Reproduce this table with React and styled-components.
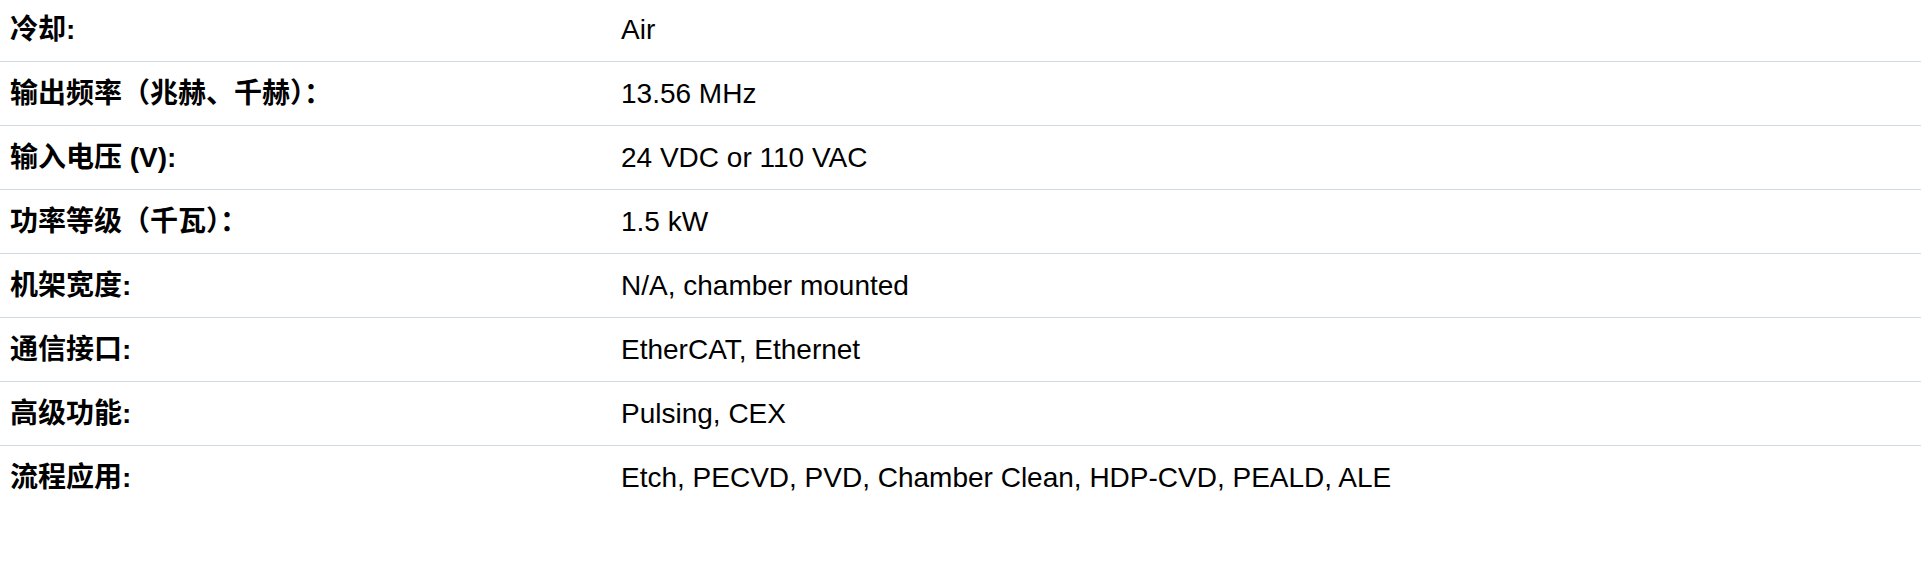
import React from 'react';
import styled, { createGlobalStyle } from 'styled-components';

const GlobalStyle = createGlobalStyle`
  html, body {
    margin: 0;
    padding: 0;
    background: #fff;
  }
  body {
    font-family: 'Liberation Sans', Arial, 'Noto Sans CJK SC', sans-serif;
    color: #000;
  }
`;

const SpecTable = styled.div`
  display: flex;
  flex-direction: column;
  width: 100%;
  margin-top: -2px;
`;

const SpecRow = styled.div`
  display: grid;
  grid-template-columns: 611px 1fr;
  border-bottom: 1px solid ${({ $last }) => ($last ? 'transparent' : '#d2dae1')};
`;

const SpecLabel = styled.div`
  padding: 10px 10px;
  font-size: 28px;
  line-height: 43px;
  font-weight: 700;
  font-family: 'Liberation Sans', Arial, 'Noto Sans CJK SC', sans-serif;
`;

const SpecValue = styled.div`
  padding: 10px 10px;
  font-size: 28px;
  line-height: 43px;
  font-weight: 400;
`;

const specs = [
  { label: '冷却:', value: 'Air' },
  { label: '输出频率（兆赫、千赫）：', value: '13.56 MHz' },
  { label: '输入电压 (V):', value: '24 VDC or 110 VAC' },
  { label: '功率等级（千瓦）：', value: '1.5 kW' },
  { label: '机架宽度:', value: 'N/A, chamber mounted' },
  { label: '通信接口:', value: 'EtherCAT, Ethernet' },
  { label: '高级功能:', value: 'Pulsing, CEX' },
  { label: '流程应用:', value: 'Etch, PECVD, PVD, Chamber Clean, HDP-CVD, PEALD, ALE' },
];

const App = () => {
  return (
    <>
      <GlobalStyle />
      <SpecTable>
        {specs.map((s, i) => (
          <SpecRow key={s.label} $last={i === specs.length - 1}>
            <SpecLabel>{s.label}</SpecLabel>
            <SpecValue>{s.value}</SpecValue>
          </SpecRow>
        ))}
      </SpecTable>
    </>
  );
};

export default App;
